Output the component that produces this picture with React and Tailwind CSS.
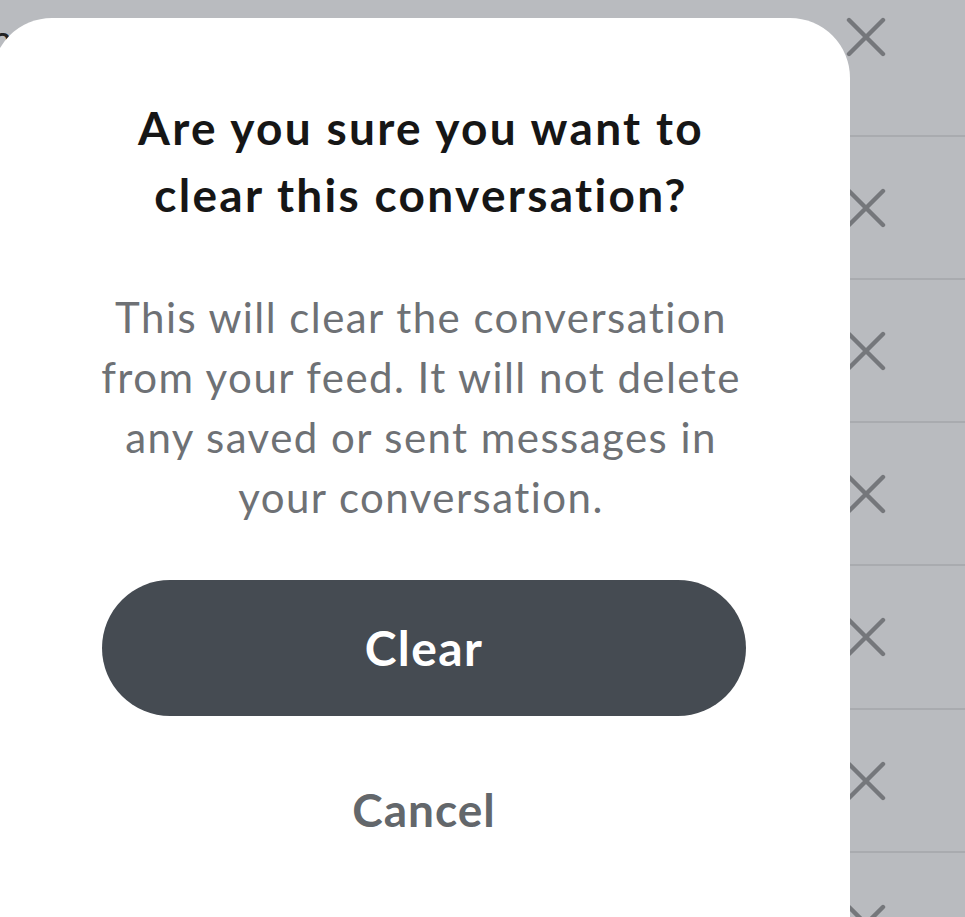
const rows = [
  { h: 'h-[135px]', first: true },
  { h: 'h-[143px]' },
  { h: 'h-[143px]' },
  { h: 'h-[143px]' },
  { h: 'h-[144px]' },
  { h: 'h-[143px]' },
  { h: 'h-[143px]' },
];

function CloseX() {
  return (
    <svg width="40" height="40" viewBox="0 0 40 40" fill="none" stroke="#75777b" strokeWidth="4.4" strokeLinecap="round">
      <path d="M3 3 L37 37 M37 3 L3 37" />
    </svg>
  );
}

function FeedRow({ h, first }) {
  return (
    <div className={`${h} flex justify-end ${first ? 'items-start pt-[17px]' : 'items-center border-t-2 border-[#a9abaf]'} pr-[79px]`}>
      <CloseX />
    </div>
  );
}

export default function App() {
  return (
    <div className="relative w-[965px] h-[917px] overflow-hidden bg-[#b9bbbf] font-['Lato',sans-serif]">
      {/* feed behind the sheet */}
      <div className="flex flex-col">
        {rows.map((r, i) => (
          <FeedRow key={i} {...r} />
        ))}
      </div>
      <span className="absolute left-[-9px] top-[10px] text-[38px] text-[#222]">n</span>

      {/* confirm sheet */}
      <div className="absolute left-[-8px] top-[18px] w-[858px] h-[960px] rounded-[60px] bg-white flex flex-col items-center pt-[76px] text-center">
        <h1 className="text-[46px] leading-[67px] font-bold tracking-[2.3px] text-[#161616]">
          Are you sure you want to
          <br />
          clear this conversation?
        </h1>
        <p className="mt-[59px] text-[42px] leading-[60px] tracking-[1.45px] text-[#6e7175]">
          This will clear the conversation
          <br />
          from your feed. It will not delete
          <br />
          any saved or sent messages in
          <br />
          your conversation.
        </p>
        <button className="mt-[53px] w-[644px] h-[136px] ml-[6px] rounded-full bg-[#454b52] text-white text-[48px] font-bold tracking-[1.4px]">
          Clear
        </button>
        <button className="mt-[59px] ml-[6px] text-[46px] font-bold tracking-[1px] text-[#63676b]">Cancel</button>
      </div>
    </div>
  );
}
